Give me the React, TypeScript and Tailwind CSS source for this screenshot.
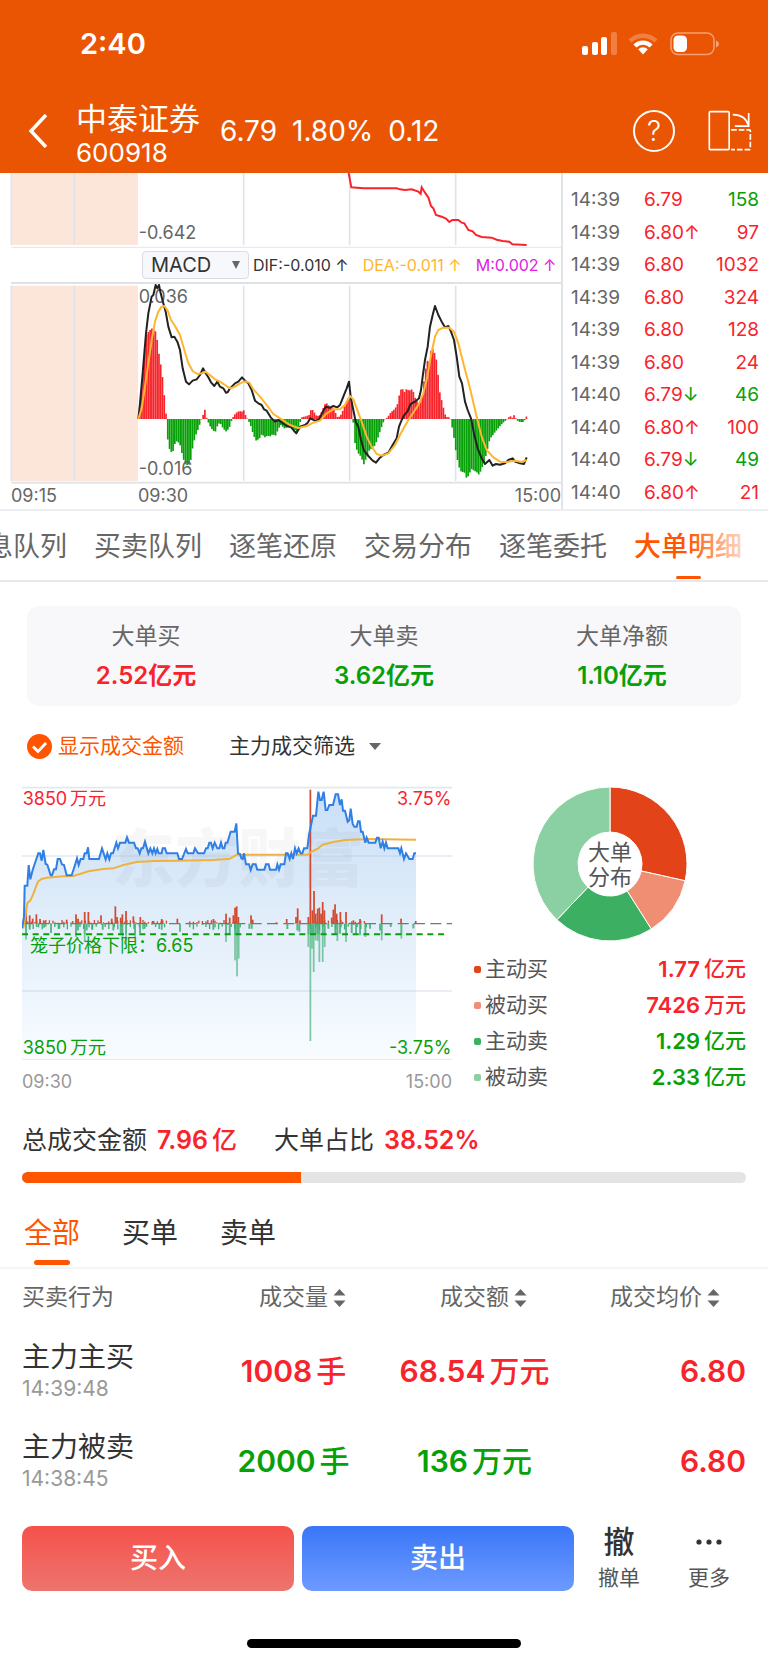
import { useState } from "react";

type Point = [number, number];

const ticks = [
  { time: "14:39", price: "6.79", dir: "", vol: "158", buy: false },
  { time: "14:39", price: "6.80", dir: "↑", vol: "97", buy: true },
  { time: "14:39", price: "6.80", dir: "", vol: "1032", buy: true },
  { time: "14:39", price: "6.80", dir: "", vol: "324", buy: true },
  { time: "14:39", price: "6.80", dir: "", vol: "128", buy: true },
  { time: "14:39", price: "6.80", dir: "", vol: "24", buy: true },
  { time: "14:40", price: "6.79", dir: "↓", vol: "46", buy: false },
  { time: "14:40", price: "6.80", dir: "↑", vol: "100", buy: true },
  { time: "14:40", price: "6.79", dir: "↓", vol: "49", buy: false },
  { time: "14:40", price: "6.80", dir: "↑", vol: "21", buy: true },
];

const tabs = ["信息队列", "买卖队列", "逐笔还原", "交易分布", "逐笔委托", "大单明细"];

const summary = [
  { label: "大单买", value: "2.52亿元", color: "text-[#f8242c]" },
  { label: "大单卖", value: "3.62亿元", color: "text-[#08a008]" },
  { label: "大单净额", value: "1.10亿元", color: "text-[#08a008]" },
];

const legend = [
  { label: "主动买", num: "1.77", unit: "亿元", dot: "bg-[#e24318]", color: "text-[#f8242c]" },
  { label: "被动买", num: "7426", unit: "万元", dot: "bg-[#ef8e73]", color: "text-[#f8242c]" },
  { label: "主动卖", num: "1.29", unit: "亿元", dot: "bg-[#3daf62]", color: "text-[#08a008]" },
  { label: "被动卖", num: "2.33", unit: "亿元", dot: "bg-[#8ad0a2]", color: "text-[#08a008]" },
];

const deals = [
  { type: "主力主买", time: "14:39:48", vol: "1008", amount: "68.54", price: "6.80", color: "text-[#f8242c]" },
  { type: "主力被卖", time: "14:38:45", vol: "2000", amount: "136", price: "6.80", color: "text-[#08a008]" },
];

// MACD histogram envelope: x, height (positive is up)
const macdEnvelope: Point[] = [
  [415, 5], [425, 120], [435, 250], [445, 265], [455, 273], [462, 270], [468, 245], [475, 190], [482, 150], [488, 100],
  [493, 35], [497, 5], [499, -50], [505, -88], [515, -105], [520, -78], [528, -66], [537, -75], [545, -110], [552, -135],
  [563, -140], [570, -122], [577, -75], [585, -48], [592, -30], [598, -12], [602, 0], [606, 10], [612, 28], [616, 8],
  [620, -5], [628, -22], [635, -33], [643, -40], [650, -20], [657, -10], [665, -25], [675, -38], [685, -28], [692, -5],
  [698, 8], [705, 18], [715, 24], [724, 22], [728, 28], [733, 14], [740, 0], [748, -15], [757, -45], [765, -65],
  [775, -60], [783, -45], [792, -55], [800, -50], [808, -52], [815, -46], [825, -50], [832, -30], [840, -18], [850, -28],
  [860, -25], [870, -28], [880, -32], [892, -38], [898, -10], [902, 5], [915, 8], [925, 12], [932, 32], [940, 20],
  [948, 8], [958, 12], [968, 35], [975, 50], [982, 42], [990, 35], [1000, 28], [1010, 5], [1018, 8], [1028, 30],
  [1040, 60], [1050, 70], [1055, 20], [1058, -20], [1062, -70], [1070, -100], [1080, -112], [1090, -138], [1095, -120],
  [1105, -95], [1115, -85], [1122, -80], [1130, -60], [1140, -30], [1150, -3], [1160, 5], [1170, 20], [1182, 30],
  [1190, 45], [1197, 80], [1203, 95], [1210, 80], [1217, 90], [1225, 85], [1235, 90], [1242, 65], [1250, 50], [1257, 45],
  [1265, 70], [1272, 140], [1280, 175], [1287, 170], [1292, 220], [1298, 205], [1305, 190], [1312, 130], [1317, 80],
  [1325, 45], [1332, 15], [1340, 3], [1346, 7], [1350, -3], [1354, -25], [1360, -60], [1367, -110], [1375, -145],
  [1382, -160], [1390, -158], [1398, -180], [1405, -165], [1412, -150], [1420, -155], [1428, -160], [1435, -168],
  [1442, -150], [1450, -130], [1460, -90], [1467, -60], [1475, -50], [1482, -40], [1492, -28], [1500, -18], [1510, -8],
  [1520, 0], [1527, 10], [1534, 3], [1540, 12], [1548, -4], [1555, -8], [1565, -10], [1572, -3], [1577, 8], [1582, 22],
];

function sample(env: Point[], x: number) {
  for (let i = 1; i < env.length; i++) {
    if (x <= env[i][0]) {
      const [x0, y0] = env[i - 1];
      const [x1, y1] = env[i];
      return y0 + ((y1 - y0) * (x - x0)) / (x1 - x0);
    }
  }
  return env[env.length - 1][1];
}

const macdBars = Array.from({ length: 220 }, (_, i) => {
  const x = 416 + i * 5.3;
  return { x, h: sample(macdEnvelope, x) };
});

const difLine =
  "415,747 420,700 428,610 438,490 445,430 455,380 460,375 467,345 472,355 477,345 482,370 490,400 497,425 505,470 515,502 523,500 532,515 540,540 548,595 558,635 567,643 578,632 590,628 600,615 609,595 616,608 625,622 633,637 643,648 652,635 660,650 670,655 678,668 683,667 690,655 705,640 715,635 726,622 735,632 745,640 755,660 765,692 775,700 785,705 792,718 800,722 812,742 825,755 835,750 845,757 860,768 872,770 880,780 889,790 900,770 915,765 923,758 931,745 945,752 957,748 967,728 977,710 990,713 1000,708 1012,712 1020,705 1030,680 1040,655 1047,635 1052,680 1060,720 1067,755 1075,770 1083,810 1092,842 1105,858 1118,872 1128,878 1138,865 1150,855 1165,848 1178,825 1190,805 1197,770 1205,750 1213,735 1222,725 1232,702 1245,695 1257,685 1263,660 1268,620 1275,570 1283,530 1290,470 1298,435 1305,408 1315,435 1325,455 1335,472 1345,468 1353,485 1362,510 1370,560 1378,620 1386,640 1395,695 1403,720 1413,745 1423,795 1433,835 1445,865 1455,882 1468,870 1478,887 1488,882 1500,884 1515,880 1525,870 1538,865 1545,875 1560,880 1572,882 1580,862";

const deaLine =
  "415,747 425,715 435,650 445,580 455,510 465,455 475,425 485,410 493,408 503,422 513,450 525,468 540,495 553,540 565,580 578,603 592,612 605,610 616,605 630,615 645,628 660,635 675,645 690,655 705,650 720,640 735,634 748,638 760,658 780,680 800,705 820,732 845,748 870,765 895,774 920,768 940,758 960,752 980,730 1000,718 1020,718 1035,705 1050,678 1060,688 1070,715 1085,755 1100,800 1115,830 1130,852 1145,857 1165,850 1185,825 1205,785 1225,750 1245,720 1258,700 1270,670 1282,620 1292,560 1305,500 1315,480 1330,473 1348,473 1362,485 1375,520 1390,580 1410,655 1430,740 1445,800 1460,840 1480,862 1500,875 1520,876 1545,872 1565,876 1580,870";

const flowLine =
  "1046,9 1054,52 1090,55 1190,55 1200,58 1215,60 1235,58 1255,65 1262,72 1265,52 1275,68 1285,82 1293,108 1300,115 1308,135 1325,140 1338,146 1348,156 1357,150 1375,150 1385,158 1393,160 1405,180 1418,184 1428,195 1445,201 1475,203 1490,209 1508,213 1528,215 1537,223 1580,225";

const priceLine =
  "66,475 72,440 74,347 82,347 86,285 91,328 98,300 108,270 115,250 120,250 125,272 130,240 137,282 142,284 152,316 156,316 162,298 168,298 173,267 180,267 186,283 192,285 200,316 215,316 225,285 231,265 236,285 242,267 250,267 254,250 260,250 264,232 268,267 297,267 306,235 317,268 322,250 328,268 333,250 339,250 349,218 354,235 360,218 376,218 381,202 387,218 402,218 408,235 413,235 419,250 424,235 429,235 435,215 445,250 451,235 457,250 462,235 467,250 472,237 476,250 485,250 488,235 495,235 500,250 532,250 537,267 546,267 558,237 563,250 580,250 585,235 594,250 612,250 618,235 623,235 628,218 633,218 638,235 644,218 652,235 658,235 663,218 668,235 673,235 677,218 682,218 692,185 704,185 709,160 714,250 720,252 724,265 728,267 732,250 738,283 747,283 752,300 758,283 767,283 772,299 793,299 798,283 806,283 810,299 828,299 832,283 837,299 842,283 853,283 858,250 863,250 869,267 874,250 879,267 885,235 890,250 896,235 902,250 907,250 912,235 922,235 927,195 930,180 939,137 948,137 955,65 960,90 965,90 971,65 977,120 982,120 988,105 999,105 1007,73 1014,73 1020,105 1025,88 1029,122 1035,122 1043,155 1048,150 1052,116 1058,162 1063,170 1070,170 1074,154 1079,154 1083,185 1088,185 1096,218 1100,203 1106,218 1126,218 1131,203 1136,203 1142,235 1148,215 1153,235 1158,218 1163,235 1195,235 1200,250 1204,235 1212,267 1218,250 1228,267 1238,267 1243,250 1248,250";

const averageLine =
  "70,475 76,440 82,400 92,390 100,372 106,355 114,335 125,327 140,323 190,319 220,318 240,312 265,304 310,297 340,295 370,285 410,276 460,273 530,272 640,270 690,266 710,254 923,254 930,248 952,237 968,224 1000,216 1035,210 1090,208 1100,207 1248,209";

// large-order volumes around the zero line: x, size
const buyVolumes: Point[] = [
  [78, 40], [89, 25], [98, 15], [109, 28], [120, 14], [131, 10], [200, 12], [228, 28], [234, 15], [254, 35], [265, 35],
  [303, 25], [335, 15], [346, 52], [351, 20], [362, 18], [367, 28], [378, 38], [400, 22], [421, 20], [458, 8], [485, 14],
  [532, 15], [640, 14], [678, 30], [689, 18], [700, 25], [705, 48], [710, 52], [715, 20], [753, 25], [758, 12], [829, 4],
  [860, 14], [888, 20], [893, 46], [900, 10], [925, 20], [931, 402], [937, 40], [942, 98], [947, 30], [953, 45],
  [958, 48], [963, 30], [968, 65], [973, 40], [995, 18], [1000, 42], [1005, 58], [1010, 30], [1021, 35], [1038, 35],
  [1060, 10], [1080, 14], [1145, 28], [1203, 15], [1247, 8],
];

const sellVolumes: Point[] = [
  [78, 48], [89, 18], [110, 10], [132, 12], [153, 28], [178, 15], [228, 40], [234, 20], [254, 55], [260, 20], [276, 18],
  [308, 18], [340, 20], [362, 30], [367, 50], [378, 62], [405, 40], [420, 28], [434, 15], [485, 18], [540, 24],
  [640, 18], [678, 55], [689, 30], [705, 110], [711, 158], [716, 105], [748, 15], [755, 15], [862, 16], [892, 20],
  [898, 24], [925, 70], [931, 352], [936, 75], [941, 145], [947, 50], [953, 52], [958, 115], [968, 115], [974, 70],
  [985, 15], [1006, 30], [1012, 52], [1020, 30], [1038, 55], [1055, 28], [1068, 30], [1080, 35], [1096, 40],
  [1110, 15], [1140, 20], [1145, 50], [1172, 10], [1204, 45], [1240, 14],
];

// thin background trades that fill the gaps between the large ones
const smallVolumes = Array.from({ length: 190 }, (_, i) => ({
  x: 76 + i * 5.4,
  up: (i * 7) % 5 < 3 ? 3 + ((i * 13) % 9) : 0,
  down: (i * 11) % 7 < 3 ? 4 + ((i * 17) % 14) : 0,
})).filter(({ x }) => x < 500 || (x > 560 && x < 720) || (x > 920 && x < 1110));

function slicePath(from: number, to: number) {
  const at = (r: number, t: number) => {
    const a = t * Math.PI * 2 - Math.PI / 2;
    return `${(77 + r * Math.cos(a)).toFixed(2)},${(77 + r * Math.sin(a)).toFixed(2)}`;
  };
  const large = to - from > 0.5 ? 1 : 0;
  return `M${at(77, from)} A77,77 0 ${large} 1 ${at(77, to)} L${at(32, to)} A32,32 0 ${large} 0 ${at(32, from)} Z`;
}

function Header() {
  return (
    <header className="bg-[#ea5504] text-white">
      <div className="flex h-[88px] items-center justify-between pl-20 pr-12">
        <span className="text-[29px] font-semibold">2:40</span>
        <svg className="h-6 w-[139px]" viewBox="0 0 139 24" fill="currentColor" aria-hidden="true">
          <rect x="1" y="14" width="6" height="9" rx="2" />
          <rect x="11" y="10" width="6" height="13" rx="2" />
          <rect x="20" y="5" width="6" height="18" rx="2" />
          <rect x="30" y="0" width="6" height="23" rx="2" opacity="0.25" />
          <path d="M47.5 7.5A20.5 20.5 0 0 1 76.500 7.500L73.400 10.600A16.300 16.300 0 0 0 50.600 10.600Z" opacity="0.25" />
          <path d="M52.4 12.400A13.600 13.600 0 0 1 71.600 12.400L68.600 15.400A9.400 9.400 0 0 0 55.400 15.400Z" />
          <path d="M57.2 17.300A6.900 6.900 0 0 1 66.800 17.300L62 22.600Z" />
          <rect x="90" y="1" width="43" height="21.500" rx="7" fill="none" stroke="currentColor" strokeWidth="1.500" opacity="0.45" />
          <rect x="92.500" y="3.500" width="13.500" height="16.500" rx="4.500" />
          <path d="M135 8.500v7c1.800-.7 3-2 3-3.500s-1.200-2.800-3-3.500Z" opacity="0.45" />
        </svg>
      </div>
      <div className="flex h-[85px] items-center">
        <button type="button" aria-label="返回" className="flex w-[76px] justify-center">
          <svg className="h-[34px] w-5" viewBox="0 0 20 34" fill="none" stroke="currentColor" strokeWidth="3.5">
            <path d="M18 1L3 17L18 33" />
          </svg>
        </button>
        <div className="pt-2">
          <h1 className="text-[31px] leading-9">中泰证券</h1>
          <p className="text-[26px] leading-8">600918</p>
        </div>
        <div className="flex flex-1 gap-[15px] pl-5 text-[28px]">
          <span>6.79</span>
          <span>1.80%</span>
          <span>0.12</span>
        </div>
        <button
          type="button"
          aria-label="帮助"
          className="mr-8 flex h-[42px] w-[42px] items-center justify-center rounded-full border-2 border-white text-[28px] font-light"
        >
          ?
        </button>
        <button type="button" aria-label="横屏" className="mr-4">
          <svg className="h-[43px] w-[45px]" viewBox="440 52 136 128" fill="none" stroke="currentColor" strokeWidth="5">
            <rect x="447" y="59" width="60" height="115" rx="3" />
            <path d="M518 68C545 68 560 80 566 102M566 63V103H524" />
            <path d="M513 114H568Q571 114 571 117V171Q571 174 568 174H513" strokeDasharray="17 6" />
          </svg>
        </button>
      </div>
    </header>
  );
}

function IndicatorCharts() {
  return (
    <div className="min-w-0 flex-1 border-r-2 border-[#e2e4ea]">
      <svg className="w-full" viewBox="0 9 1683 225" role="img" aria-label="资金流向">
        <rect x="34" y="9" width="380" height="216" fill="#fce6da" />
        <path d="M34 9V225M223 9V225M731 9V225M1049 9V225M1367 9V225" stroke="#e0e3ea" strokeWidth="5" />
        <path d="M34 232H1683" stroke="#e8eaee" strokeWidth="4" />
        <text x="416" y="208" fontSize="54" fill="#666">-0.642</text>
        <polyline points={flowLine} fill="none" stroke="#f8242c" strokeWidth="6" />
      </svg>
      <div className="ml-[11px] flex h-9 items-center whitespace-nowrap border-b-2 border-[#dfe1e6] pl-[131px] text-base">
        <div className="relative">
          <select
            aria-label="指标"
            className="block h-7 w-[107px] appearance-none rounded border border-[#d9dce2] bg-[#f7f8fb] pl-2 text-xl leading-6 text-[#333] outline-none"
          >
            <option>MACD</option>
          </select>
          <svg className="pointer-events-none absolute right-[9px] top-[10px] h-2 w-2" viewBox="0 0 8 8" fill="#666">
            <path d="M0 0H8L4 8Z" />
          </svg>
        </div>
        <span className="ml-1 text-[#333]">DIF:-0.010 ↑</span>
        <span className="ml-[14px] text-[#ffb52e]">DEA:-0.011 ↑</span>
        <span className="ml-[14px] text-[#dd22e0]">M:0.002 ↑</span>
      </div>
      <svg className="w-full" viewBox="0 342 1683 600" role="img" aria-label="MACD">
        <rect x="34" y="347" width="380" height="586" fill="#fce6da" />
        <path d="M34 347V933M223 347V933M731 347V933M1049 347V933M1367 347V933" stroke="#e0e3ea" strokeWidth="5" />
        <path d="M34 938H1683" stroke="#dfe1e6" strokeWidth="5" />
        {macdBars.map(({ x, h }) => (
          <rect
            key={x}
            x={x}
            y={h > 0 ? 747 - h : 747}
            width="5.1"
            height={Math.max(Math.abs(h), 1)}
            fill={h > 0 ? "#f8242c" : "#08a008"}
          />
        ))}
        <text x="416" y="400" fontSize="54" fill="#666">0.036</text>
        <text x="416" y="915" fontSize="54" fill="#666">-0.016</text>
        <polyline points={difLine} fill="none" stroke="#222" strokeWidth="6" strokeLinejoin="round" />
        <polyline points={deaLine} fill="none" stroke="#ffb52e" strokeWidth="6" strokeLinejoin="round" />
      </svg>
      <div className="flex h-6 items-center pl-[11px] text-lg text-[#666]">
        <span className="w-[127px]">09:15</span>
        <span className="flex-1">09:30</span>
        <span>15:00</span>
      </div>
    </div>
  );
}

function TickList() {
  return (
    <div className="w-[205px] pl-2 pr-[9px] pt-[11px]">
      <table className="h-[325px] w-full text-[19px] leading-6">
        <tbody>
          {ticks.map((t, i) => (
            <tr key={i}>
              <td className="w-[73px] p-0 text-[#666]">{t.time}</td>
              <td className="p-0 text-[#f8242c]">
                {t.price}
                <span className={t.dir === "↓" ? "text-[#08a008]" : "text-[#f8242c]"}>{t.dir}</span>
              </td>
              <td className={`p-0 text-right ${t.buy ? "text-[#f8242c]" : "text-[#08a008]"}`}>{t.vol}</td>
            </tr>
          ))}
        </tbody>
      </table>
    </div>
  );
}

function DetailTabs() {
  return (
    <nav className="relative flex h-[71px] justify-end gap-[27px] overflow-hidden border-b-2 border-[#e6e8ee] pr-[26px]">
      {tabs.map((tab) => {
        const active = tab === "大单明细";
        return (
          <button
            key={tab}
            type="button"
            className={`flex shrink-0 flex-col items-center text-[27px] leading-9 ${active ? "font-medium text-[#ff5500]" : "text-[#666]"}`}
          >
            <span className="pt-[18px]">{tab}</span>
            {active && <span className="mt-[11px] h-[3px] w-[25px] rounded-full bg-[#ff5500]" />}
          </button>
        );
      })}
      <div className="pointer-events-none absolute bottom-1 right-0 top-0 w-20 bg-gradient-to-r from-transparent via-white/60 to-white" />
    </nav>
  );
}

function FlowChart() {
  return (
    <div className="min-w-0 flex-1">
      <svg className="w-full" viewBox="66 48 1290 825" role="img" aria-label="大单成交走势">
        <defs>
          <linearGradient id="priceFill" x1="0" y1="0" x2="0" y2="1">
            <stop offset="0" stopColor="#c9dff7" />
            <stop offset="0.5" stopColor="#e2eefa" />
            <stop offset="1" stopColor="#f8fcff" />
          </linearGradient>
        </defs>
        <polygon points={`66,863 ${priceLine} 1248,863`} fill="url(#priceFill)" />
        <path d="M66 53H1356M66 258H1356M66 663H1356" stroke="#b9c9e0" strokeOpacity="0.42" strokeWidth="5" />
        <path d="M66 868H1356" stroke="#ececef" strokeWidth="4" />
        <text x="336" y="334" fontSize="189" fontWeight="900" fill="#000" fillOpacity="0.03">东方财富</text>
        <path d="M66 461H1356" stroke="#777" strokeWidth="4" strokeDasharray="33 16" />
        <g fill="#d2492f">
          {buyVolumes.map(([x, h]) => (
            <rect key={x} x={x - 2.5} y={461 - h} width="5.2" height={h} />
          ))}
          {smallVolumes.map(({ x, up }) => (
            <rect key={x} x={x} y={461 - up} width="4" height={up} />
          ))}
        </g>
        <g fill="#3fae72">
          {sellVolumes.map(([x, h]) => (
            <rect key={x} x={x - 2.5} y="461" width="5.2" height={h} fillOpacity="0.65" />
          ))}
          {sellVolumes.map(([x, h]) => (
            <rect key={x} x={x - 2.5} y="461" width="5.2" height={Math.min(h, 32)} fillOpacity="0.6" />
          ))}
          {smallVolumes.map(({ x, down }) => (
            <rect key={x} x={x} y="461" width="4" height={down} />
          ))}
        </g>
        <path d="M66 493H1342" stroke="#08a008" strokeWidth="6" strokeDasharray="18 14" />
        <polyline points={averageLine} fill="none" stroke="#f0b23c" strokeWidth="6" />
        <polyline points={priceLine} fill="none" stroke="#2f7fe4" strokeWidth="6" />
        <g fontSize="54">
          <text x="68" y="105" fill="#f8242c">3850</text>
          <text x="210" y="105" fill="#f8242c">万元</text>
          <text x="1354" y="105" fill="#f8242c" textAnchor="end">3.75%</text>
          <text x="90" y="546" fill="#08a008">笼子价格下限：6.65</text>
          <text x="68" y="851" fill="#08a008">3850</text>
          <text x="210" y="851" fill="#08a008">万元</text>
          <text x="1354" y="851" fill="#08a008" textAnchor="end">-3.75%</text>
        </g>
      </svg>
      <div className="flex justify-between pt-[7px] text-lg text-[#999]">
        <span>09:30</span>
        <span>15:00</span>
      </div>
    </div>
  );
}

function Distribution() {
  return (
    <div className="w-[272px] pt-px">
      <svg className="mx-auto h-[154px] w-[154px]" viewBox="0 0 154 154" role="img" aria-label="大单分布">
        <g stroke="#fff" strokeWidth="1">
          <path d={slicePath(0, 0.285)} fill="#e24318" />
          <path d={slicePath(0.285, 0.41)} fill="#ef8e73" />
          <path d={slicePath(0.41, 0.621)} fill="#3daf62" />
          <path d={slicePath(0.621, 1)} fill="#8ad0a2" />
        </g>
        <g fontSize="22" fill="#555" textAnchor="middle">
          <text x="77" y="73">大单</text>
          <text x="77" y="98">分布</text>
        </g>
      </svg>
      <ul className="pt-[10px] text-[21px] leading-9">
        {legend.map((item) => (
          <li key={item.label} className="flex items-center">
            <span className={`mr-1 h-[7px] w-[7px] rounded-[2px] ${item.dot}`} />
            <span className="flex-1 text-[#555]">{item.label}</span>
            <span className={`flex gap-1 font-semibold ${item.color}`}>
              <span className="text-[22px]">{item.num}</span>
              <span className="font-medium">{item.unit}</span>
            </span>
          </li>
        ))}
      </ul>
    </div>
  );
}

function SortHeader({ label }: { label: string }) {
  return (
    <button type="button" className="inline-flex items-center gap-[5px]">
      {label}
      <svg className="h-[18px] w-[13px]" viewBox="0 0 13 18" fill="#666" aria-hidden="true">
        <path d="M6.500 0L12.500 6.500H0.500ZM6.500 18L12.500 11.500H0.500Z" />
      </svg>
    </button>
  );
}

function DealTable() {
  return (
    <div className="px-[22px]">
      <table className="w-full table-fixed">
        <thead>
          <tr className="h-[57px] text-[23px] text-[#666]">
            <th className="p-0 text-left font-normal">买卖行为</th>
            <th className="p-0 pl-[18px] font-normal"><SortHeader label="成交量" /></th>
            <th className="p-0 pl-[18px] font-normal"><SortHeader label="成交额" /></th>
            <th className="p-0 pr-[26px] text-right font-normal"><SortHeader label="成交均价" /></th>
          </tr>
        </thead>
        <tbody>
          {deals.map((deal) => (
            <tr key={deal.time} className="h-[90px] whitespace-nowrap text-[30px] font-semibold">
              <td className="p-0 font-normal">
                <p className="text-[28px] leading-9 text-[#333]">{deal.type}</p>
                <p className="text-[21px] leading-7 text-[#999]">{deal.time}</p>
              </td>
              <td className={`p-0 text-center ${deal.color}`}>
                {deal.vol}
                <span className="ml-1 font-medium">手</span>
              </td>
              <td className={`p-0 text-center ${deal.color}`}>
                {deal.amount}
                <span className="ml-1 font-medium">万元</span>
              </td>
              <td className="p-0 text-right text-[#f8242c]">{deal.price}</td>
            </tr>
          ))}
        </tbody>
      </table>
    </div>
  );
}

function ActionBar() {
  return (
    <footer className="flex items-center gap-2 px-[22px] pt-4">
      <button
        type="button"
        className="h-[65px] flex-1 rounded-[10px] bg-gradient-to-b from-[#f5504a] to-[#ed746e] text-[28px] font-medium text-white"
      >
        买入
      </button>
      <button
        type="button"
        className="h-[65px] flex-1 rounded-[10px] bg-gradient-to-b from-[#3a76f8] to-[#6d9aff] text-[28px] font-medium text-white"
      >
        卖出
      </button>
      <div className="flex w-[164px] text-[21px] text-[#555]">
        <button type="button" className="flex w-[74px] flex-col items-center">
          <span className="text-[31px] font-medium leading-10 text-[#333]">撤</span>
          <span className="leading-8">撤单</span>
        </button>
        <button type="button" className="ml-4 flex w-[74px] flex-col items-center">
          <svg className="h-10 w-7" viewBox="0 0 28 40" fill="#333" aria-hidden="true">
            <circle cx="4" cy="20" r="2.600" />
            <circle cx="14" cy="20" r="2.600" />
            <circle cx="24" cy="20" r="2.600" />
          </svg>
          <span className="leading-8">更多</span>
        </button>
      </div>
    </footer>
  );
}

export default function App() {
  const [showAmount, setShowAmount] = useState(true);

  return (
    <div className="min-h-screen w-full overflow-hidden bg-white font-[Inter,'Noto_Sans_CJK_SC',sans-serif]">
      <Header />

      <section className="flex border-b-2 border-[#eceef1]">
        <IndicatorCharts />
        <TickList />
      </section>

      <DetailTabs />

      <dl className="mx-[27px] mt-6 grid grid-cols-3 rounded-xl bg-[#f8f8fb] py-[10px] text-center">
        {summary.map((item) => (
          <div key={item.label}>
            <dt className="text-[23px] leading-10 text-[#666]">{item.label}</dt>
            <dd className={`text-2xl font-semibold leading-10 ${item.color}`}>{item.value}</dd>
          </div>
        ))}
      </dl>

      <div className="mx-[27px] mt-5 flex h-10 items-center text-[21px]">
        <label className="flex items-center gap-[6px] text-[#ff5500]">
          <input
            type="checkbox"
            checked={showAmount}
            onChange={(e) => setShowAmount(e.target.checked)}
            className="peer sr-only"
          />
          <svg className="h-[25px] w-[25px]" viewBox="0 0 25 25" aria-hidden="true">
            <circle cx="12.500" cy="12.500" r="12.500" fill={showAmount ? "#ff5500" : "#ccc"} />
            <path d="M6 12.500L11 17.500L19 9" fill="none" stroke="#fff" strokeWidth="2.800" />
          </svg>
          显示成交金额
        </label>
        <button type="button" className="ml-[45px] flex items-center gap-[14px] text-[#333]">
          主力成交筛选
          <svg className="h-[7px] w-3" viewBox="0 0 12 7" fill="#666" aria-hidden="true">
            <path d="M0 0H12L6 7Z" />
          </svg>
        </button>
      </div>

      <section className="flex gap-[22px] px-[22px] pt-5">
        <FlowChart />
        <Distribution />
      </section>

      <section className="px-[22px] pt-6">
        <p className="flex items-center text-[25px] leading-10 text-[#333]">
          总成交金额
          <span className="ml-[10px] font-semibold text-[#f8242c]">7.96</span>
          <span className="ml-1 font-medium text-[#f8242c]">亿</span>
          <span className="ml-[37px]">大单占比</span>
          <span className="ml-[10px] font-semibold text-[#f8242c]">38.52%</span>
        </p>
        <div className="mt-3 h-[11px] overflow-hidden rounded-full bg-[#e4e4e4]">
          <div className="h-full bg-[#ff5500]" style={{ width: "38.52%" }} />
        </div>
      </section>

      <nav className="mt-7 flex gap-[42px] border-b-2 border-[#f5f5f8] px-6 text-[28px] leading-[44px] text-[#333]">
        <button type="button" className="flex flex-col items-center text-[#ff5500]">
          全部
          <span className="mb-[2px] mt-[5px] h-[5px] w-9 rounded-full bg-[#ff5500]" />
        </button>
        <button type="button" className="flex">买单</button>
        <button type="button" className="flex">卖单</button>
      </nav>

      <DealTable />
      <ActionBar />

      <div className="mx-auto mb-[13px] mt-[45px] h-[9px] w-[274px] rounded-full bg-black" />
    </div>
  );
}
